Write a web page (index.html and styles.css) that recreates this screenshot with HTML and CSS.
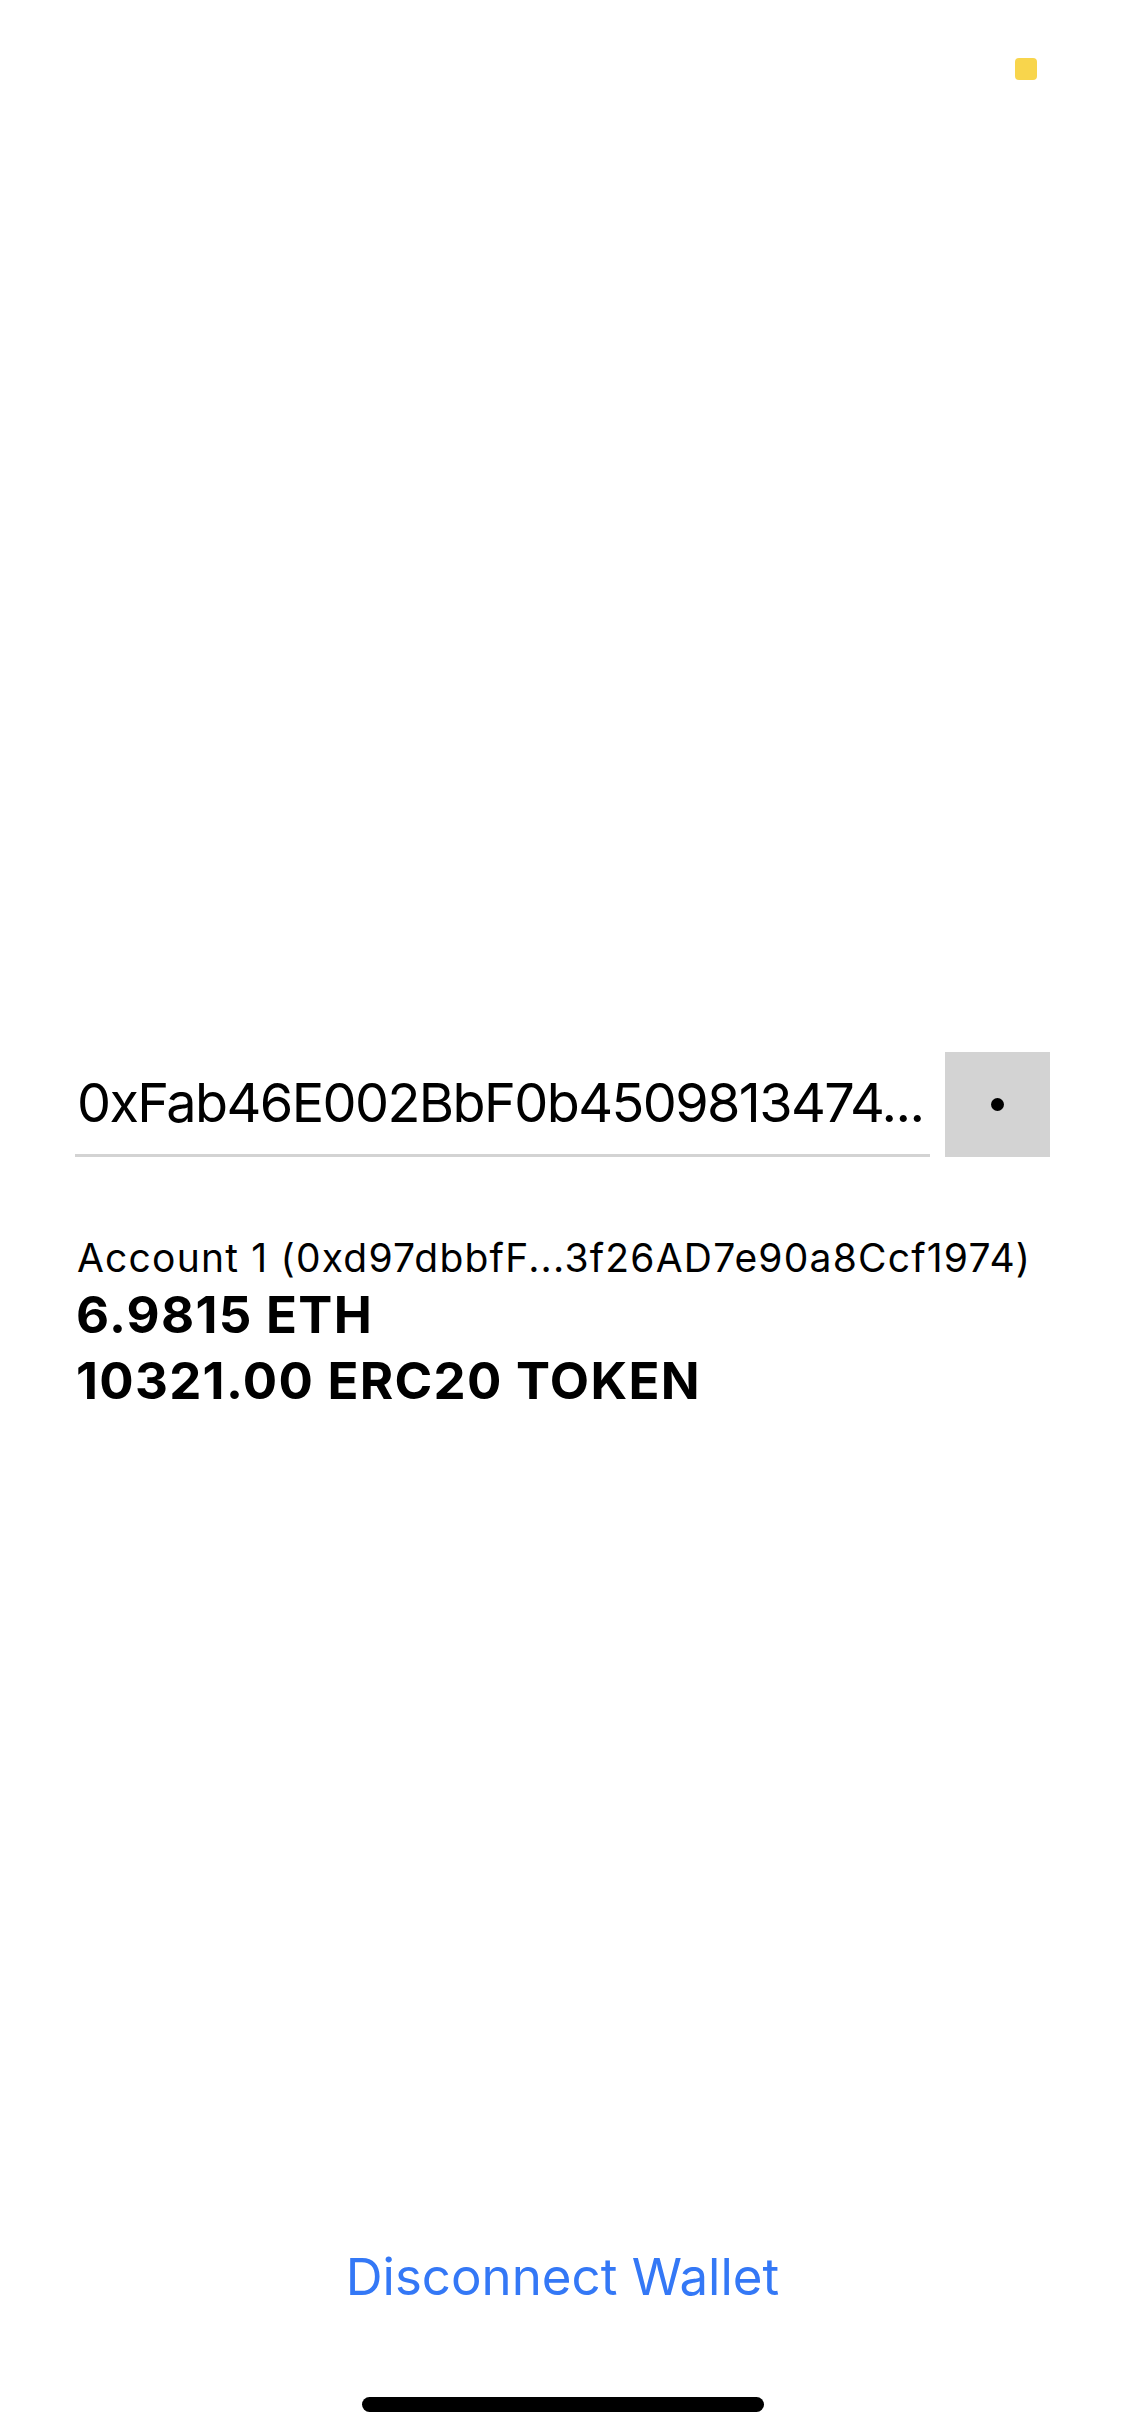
FILE: index.html
```html
<!DOCTYPE html>
<html lang="en">
<head>
<meta charset="utf-8">
<title>Wallet</title>
<link rel="stylesheet" href="styles.css">
</head>
<body>
<div class="page">
  <header class="topbar">
    <span class="status-dot"></span>
  </header>
  <main class="content">
    <div class="address-row">
      <div class="address-field">0xFab46E002BbF0b4509813474...</div>
      <button class="dot-button" type="button"><span class="dot"></span></button>
    </div>
    <div class="account">
      <div class="account-name">Account 1 (0xd97dbbfF...3f26AD7e90a8Ccf1974)</div>
      <div class="balance balance-eth">6.9815 ETH</div>
      <div class="balance balance-token">10321.00 ERC20 TOKEN</div>
    </div>
  </main>
  <footer class="footer">
    <button class="disconnect" type="button">Disconnect Wallet</button>
    <div class="home-indicator"></div>
  </footer>
</div>
</body>
</html>
```

FILE: styles.css
```css
html, body {
  margin: 0;
  padding: 0;
  background: #ffffff;
}

body {
  font-family: Inter, "Noto Sans", "Liberation Sans", sans-serif;
  color: #000000;
}

.page {
  width: 1125px;
  height: 2436px;
  display: flex;
  flex-direction: column;
  overflow: hidden;
}

.topbar {
  display: flex;
  justify-content: flex-end;
  padding: 58px 88px 0 0;
}

.status-dot {
  display: block;
  width: 22px;
  height: 22px;
  border-radius: 4px;
  background: #f8d54c;
}

.content {
  display: flex;
  flex-direction: column;
  padding: 0 75px;
  margin-top: 972px;
}

.address-row {
  display: flex;
  align-items: flex-end;
  gap: 15px;
}

.address-field {
  flex: 1;
  min-width: 0;
  height: 102px;
  line-height: 102px;
  font-size: 54px;
  border-bottom: 3px solid #d3d3d3;
  white-space: nowrap;
  overflow: hidden;
  padding-left: 2px;
  letter-spacing: -1.6px;
}

.dot-button {
  flex: none;
  width: 105px;
  height: 105px;
  border: none;
  margin: 0;
  padding: 0;
  background: #d3d3d3;
  display: flex;
  align-items: center;
  justify-content: center;
}

.dot {
  display: block;
  width: 13px;
  height: 13px;
  border-radius: 50%;
  background: #000000;
}

.account {
  margin-top: 71px;
  display: flex;
  flex-direction: column;
}

.account-name {
  font-size: 39px;
  line-height: 59px;
  padding-left: 2px;
  letter-spacing: 1.2px;
  white-space: nowrap;
}

.balance {
  font-size: 51px;
  font-weight: 700;
  padding-left: 1px;
  letter-spacing: 1.3px;
  white-space: nowrap;
}

.balance-eth {
  line-height: 56px;
}

.balance-token {
  line-height: 76px;
}

.footer {
  margin-top: auto;
  display: flex;
  flex-direction: column;
  align-items: center;
  padding-bottom: 24px;
}

.disconnect {
  border: none;
  background: none;
  padding: 0;
  margin: 0;
  font-family: inherit;
  font-size: 51px;
  line-height: 60px;
  color: #3478f6;
}

.home-indicator {
  margin-top: 90px;
  width: 402px;
  height: 15px;
  border-radius: 8px;
  background: #000000;
}
```
